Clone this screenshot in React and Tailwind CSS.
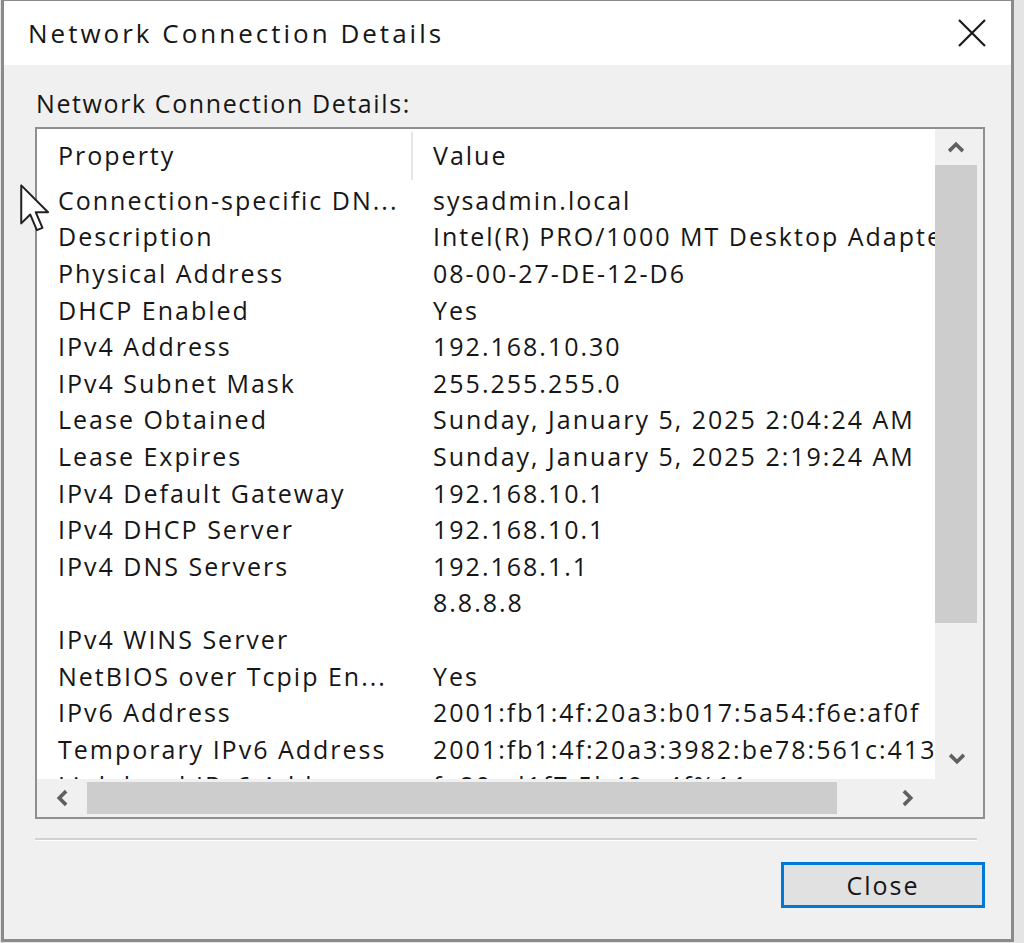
import React from "react";

const rows = [
  ["Connection-specific DN...", "sysadmin.local"],
  ["Description", "Intel(R) PRO/1000 MT Desktop Adapter"],
  ["Physical Address", "08-00-27-DE-12-D6"],
  ["DHCP Enabled", "Yes"],
  ["IPv4 Address", "192.168.10.30"],
  ["IPv4 Subnet Mask", "255.255.255.0"],
  ["Lease Obtained", "Sunday, January 5, 2025 2:04:24 AM"],
  ["Lease Expires", "Sunday, January 5, 2025 2:19:24 AM"],
  ["IPv4 Default Gateway", "192.168.10.1"],
  ["IPv4 DHCP Server", "192.168.10.1"],
  ["IPv4 DNS Servers", "192.168.1.1"],
  ["", "8.8.8.8"],
  ["IPv4 WINS Server", ""],
  ["NetBIOS over Tcpip En...", "Yes"],
  ["IPv6 Address", "2001:fb1:4f:20a3:b017:5a54:f6e:af0f"],
  ["Temporary IPv6 Address", "2001:fb1:4f:20a3:3982:be78:561c:4132"],
  ["Link-local IPv6 Address", "fe80::d1f7:5b49:c4f%11"],
];

function Chevron({ dir }) {
  const paths = {
    up: "M3 11 L8 6 L13 11",
    down: "M3 5 L8 10 L13 5",
    left: "M11 3 L6 8 L11 13",
    right: "M5 3 L10 8 L5 13",
  };
  return (
    <svg width="22" height="22" viewBox="0 0 16 16">
      <path d={paths[dir]} fill="none" stroke="#606060" strokeWidth="2.6" />
    </svg>
  );
}

export default function App() {
  return (
    <div
      className="relative w-[1024px] h-[943px] overflow-hidden bg-[#e4e4e4] text-[#161616] font-medium"
      style={{ fontFamily: '"Open Sans", "Noto Sans", sans-serif' }}
    >
      <div className="ml-[1px] w-[1013px] h-[942px] border-l-[3px] border-r-[3px] border-b-[3px] border-t-[1px] border-[#8a8a8a] flex flex-col">
        {/* Title bar */}
        <div className="h-[64px] bg-white flex items-center justify-between pl-[24px] pr-[20px] shrink-0">
          <span className="text-[26px] leading-none tracking-[3px]">Network Connection Details</span>
          <svg width="34" height="34" viewBox="0 0 34 34" className="mr-[2px]">
            <path d="M4 4 L30 30 M30 4 L4 30" stroke="#1a1a1a" strokeWidth="2.2" />
          </svg>
        </div>
        {/* Body */}
        <div className="flex-1 bg-[#f0f0f0] flex flex-col pl-[31px] pr-[23px]">
          <div className="h-[62px] flex items-center pl-[1px] pt-[14px] text-[25px] leading-none tracking-[1.6px]">
            Network Connection Details:
          </div>
          {/* List box */}
          <div className="w-[950px] h-[692px] border-2 border-[#8f8f8f] bg-white flex flex-col">
            <div className="flex h-[650px]">
              <div className="w-[898px] h-[650px] overflow-hidden text-[25px] leading-none tracking-[2px]">
                {/* header */}
                <div className="flex h-[53px] items-center">
                  <div className="w-[376px] h-[48px] pl-[21px] flex items-center border-r-2 border-[#e5e5e5]">
                    Property
                  </div>
                  <div className="pl-[20px]">Value</div>
                </div>
                {rows.map(([k, v], i) => (
                  <div key={i} className="flex h-[36.6px] items-center whitespace-nowrap">
                    <div className="w-[376px] pl-[21px] shrink-0">{k}</div>
                    <div className="pl-[20px]">{v}</div>
                  </div>
                ))}
              </div>
              {/* vertical scrollbar */}
              <div className="w-[48px] h-[650px] bg-[#f0f0f0] flex flex-col">
                <div className="h-[36px] w-[42px] flex items-center justify-center">
                  <Chevron dir="up" />
                </div>
                <div className="w-[42px] h-[458px] bg-[#cdcdcd]" />
                <div className="flex-1" />
                <div className="h-[40px] w-[44px] flex items-center justify-center">
                  <Chevron dir="down" />
                </div>
              </div>
            </div>
            {/* horizontal scrollbar */}
            <div className="flex h-[38px] bg-[#f0f0f0]">
              <div className="w-[898px] flex items-center">
                <div className="w-[50px] h-full flex items-center justify-center">
                  <Chevron dir="left" />
                </div>
                <div className="w-[750px] h-[32px] bg-[#cdcdcd]" />
                <div className="flex-1 h-full flex items-center justify-end pr-[16px]">
                  <Chevron dir="right" />
                </div>
              </div>
              <div className="flex-1 bg-[#f0f0f0]" />
            </div>
          </div>
          {/* separator */}
          <div className="mt-[19px] w-[942px] h-[3px] bg-[#d2d2d2] border-b border-white" />
          {/* buttons */}
          <div className="flex justify-end mt-[21px] w-[950px]">
            <button className="w-[204px] h-[46px] border-[3px] border-[#0078d7] bg-[#e1e1e1] text-[25px] leading-none tracking-[2px] text-[#161616] font-medium">
              Close
            </button>
          </div>
        </div>
      </div>
      {/* mouse cursor */}
      <svg className="absolute left-[19px] top-[183px]" width="38" height="54" viewBox="0 0 17 24">
        <path d="M1 1 L1 18 L5 14 L8 21 L10.5 20 L7.5 13 L13 13 Z" fill="white" stroke="#222" strokeWidth="0.9" strokeLinejoin="round" />
      </svg>
    </div>
  );
}
